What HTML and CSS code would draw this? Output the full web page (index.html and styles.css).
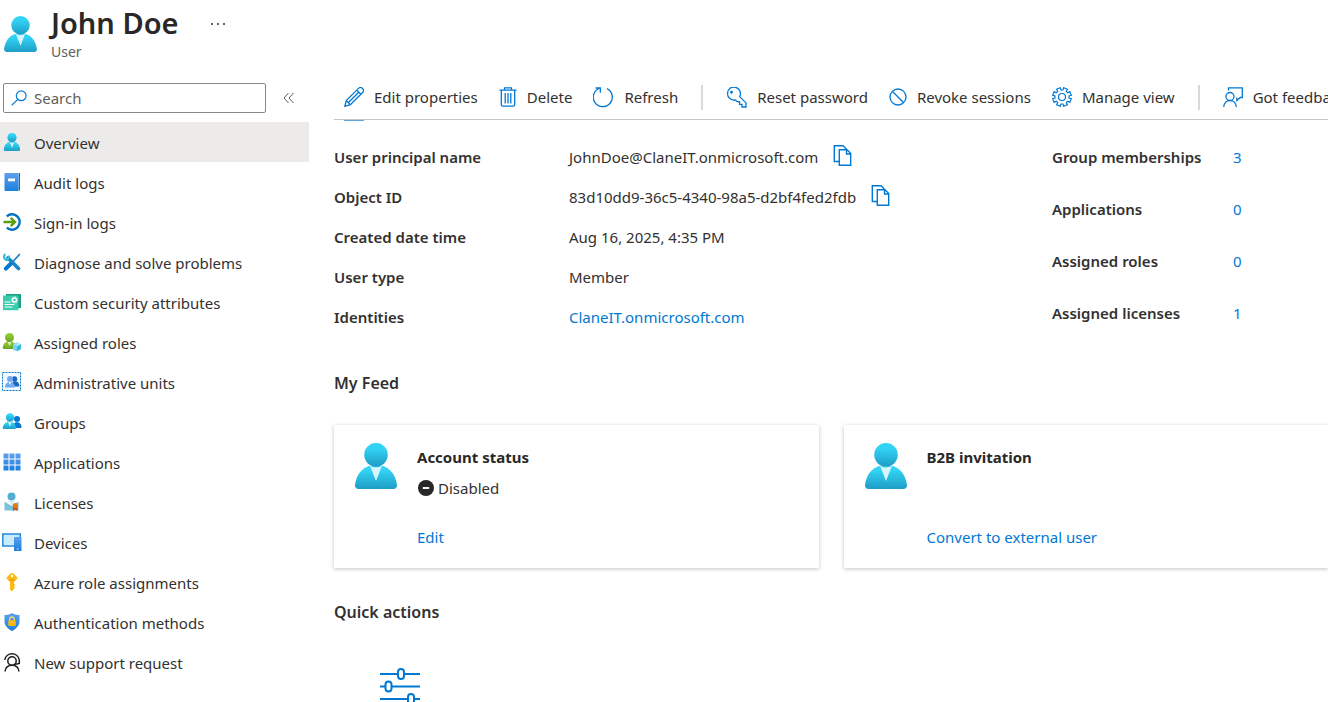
FILE: index.html
```html
<!DOCTYPE html>
<html lang="en">
<head>
<meta charset="utf-8">
<title>John Doe - User</title>
<link rel="stylesheet" href="styles.css">
</head>
<body>
<svg class="sprite" width="0" height="0" aria-hidden="true">
  <defs>
    <linearGradient id="cyan" x1="0" y1="0" x2="0" y2="1"><stop offset="0.2" stop-color="#32d4f5"/><stop offset="1" stop-color="#1f9dc6"/></linearGradient>
    <linearGradient id="blue" x1="0" y1="0" x2="0" y2="1"><stop offset="0" stop-color="#5ea0ef"/><stop offset="1" stop-color="#1b7fdc"/></linearGradient>
    <linearGradient id="green" x1="0" y1="0" x2="0" y2="1"><stop offset="0" stop-color="#9bd431"/><stop offset="1" stop-color="#6aa52a"/></linearGradient>
    <symbol id="person" viewBox="0 0 42 46">
      <path d="M38.500 46a3.500 3.500 0 0 0 3.500-4C40.500 30.500 33.500 22 21 22S1.500 30.500 0 42a3.500 3.500 0 0 0 3.500 4z" fill="url(#cyan)"/>
      <path d="M21 24.500a12 12 0 0 1-6-1.800L21 38l6-15.300a12 12 0 0 1-6 1.800z" fill="#d8f5fd"/>
      <circle cx="21" cy="11.800" r="11.800" fill="url(#cyan)"/>
    </symbol>
    <symbol id="copy" viewBox="0 0 18 21">
      <path d="M5.500 16.500H.800V.800h8.700l3.500 3.500M5.800 4.800h7.700l3.700 3.700v11.700H5.800zM13 5v4h4" fill="none" stroke="#0078d4" stroke-width="1.400"/>
    </symbol>
  </defs>
</svg>

<header class="page-header">
  <svg class="header-icon" aria-hidden="true"><use href="#person"/></svg>
  <div>
    <h1 class="title">John Doe</h1>
    <p class="subtitle">User</p>
  </div>
  <button class="plain more" aria-label="More">
    <svg width="16" height="4" viewBox="0 0 16 4"><g fill="#323130"><circle cx="2" cy="2" r="1"/><circle cx="8" cy="2" r="1"/><circle cx="14" cy="2" r="1"/></g></svg>
  </button>
</header>

<div class="layout">
  <aside class="sidebar">
    <div class="search-row">
      <label class="search">
        <svg width="16" height="16" viewBox="0 0 16 16" fill="none" stroke="#0078d4" stroke-width="1.200"><circle cx="10.200" cy="5.800" r="4.900"/><path d="M6.700 9.300.600 15.400"/></svg>
        <input class="search-input" type="text" placeholder="Search" aria-label="Search">
      </label>
      <button class="plain" aria-label="Collapse menu">
        <svg width="12" height="12" viewBox="0 0 12 12" fill="none" stroke="#605e5c" stroke-width="1"><path d="M5.500 1 1 6l4.500 5M10.500 1 6 6l4.500 5"/></svg>
      </button>
    </div>
    <nav class="menu">
      <a class="menu-item active" href="#"><svg viewBox="0 0 18 19"><use href="#person" width="18" height="19"/></svg>Overview</a>
      <a class="menu-item" href="#"><svg viewBox="0 0 18 18"><path d="M3.500 0H17v17.500H3.500z" fill="#bfe0fa"/><path d="M15.800 0H17v17.500h-1.200z" fill="#0f6cbd"/><rect x="1.500" width="14" height="18" rx="1" fill="url(#blue)"/><rect x="5" y="5.500" width="7" height="2.800" fill="#fff"/></svg>Audit logs</a>
      <a class="menu-item" href="#"><svg viewBox="0 0 18 18" fill="none"><path d="M3.800 3.300a7.700 7.700 0 1 1 0 11.400" stroke="#0072c6" stroke-width="2.400"/><path d="M.500 9h11M7.700 4.800 12 9l-4.300 4.200" stroke="#59a00c" stroke-width="2.400"/></svg>Sign-in logs</a>
      <a class="menu-item" href="#"><svg viewBox="0 0 18 18" fill="none"><path d="M15.500 15.500 5 5" stroke="#1b87c9" stroke-width="3.800" stroke-linecap="round"/><path d="M5.500 6.500A2.800 2.800 0 1 1 2.500 1.200" stroke="#32bedd" stroke-width="2"/><path d="M2.200 6.500a3 3 0 0 0 3.600-4" stroke="#32bedd" stroke-width="2"/><path d="M9 9.500 16.800 1.200" stroke="#1b87c9" stroke-width="1.800"/><path d="M2.800 15.700 7.500 11" stroke="#0078d4" stroke-width="4" stroke-linecap="round"/></svg>Diagnose and solve problems</a>
      <a class="menu-item" href="#"><svg viewBox="0 0 18 18"><path d="M3 1h15v14H3z" fill="#1d9f82"/><path d="M0 2.500h15.500v14.700H0z" fill="#3bcbad"/><path d="M1.500 9h6M1.500 11.500h10M1.500 14h8" stroke="#fff" stroke-width="1.200"/><circle cx="11.500" cy="7" r="2" fill="none" stroke="#fff" stroke-width="1.300"/><circle cx="11.500" cy="7" r="3.200" fill="none" stroke="#fff" stroke-width="1" stroke-dasharray="1 1.500"/></svg>Custom security attributes</a>
      <a class="menu-item" href="#"><svg viewBox="0 0 18 18"><path d="M1.200 16A1.500 1.500 0 0 1-.200 14C.400 10.500 3 8 6.500 8s6 2.500 6.500 6v2z" fill="url(#green)"/><path d="M4.500 8.500 6.500 13l2-4.500z" fill="#eaf7cf"/><circle cx="6.500" cy="4.500" r="4.500" fill="url(#green)"/><path d="m14 9.500 4 2v4.800l-4 2-4-2v-4.800z" fill="#37b7df"/><path d="m10 11.500 4 1.700 4-1.700-4-2z" fill="#9cebff"/><path d="M10 11.500v4.800l4 2v-5z" fill="#70d5f0"/></svg>Assigned roles</a>
      <a class="menu-item" href="#"><svg viewBox="0 0 18 18"><rect x="-.500" y="-.500" width="18" height="18" fill="#f3f9ff" stroke="#0078d4" stroke-dasharray="2 1"/><circle cx="11.500" cy="6" r="2.700" fill="#1967bd"/><path d="M8 13.500c0-7 8.500-7 8.500 0z" fill="#1967bd"/><circle cx="7" cy="6" r="3" fill="#72a9f7"/><path d="M2 14.500C1.500 7 12.500 7 12 14.500z" fill="#72a9f7"/><path d="m5.800 9 1.200 3 1.200-3z" fill="#fff"/></svg>Administrative units</a>
      <a class="menu-item" href="#"><svg viewBox="0 0 18 18"><circle cx="14" cy="6" r="3" fill="#0078d4"/><path d="M9.500 15c0-8 9-7 9-1 0 .700-.400 1-1 1z" fill="#0078d4"/><circle cx="7" cy="4.500" r="4.200" fill="url(#cyan)"/><path d="M1 16a1.300 1.300 0 0 1-1.300-1.500C.500 11 3 8.500 6.500 8.500S12.500 11 13 14.500A1.300 1.300 0 0 1 12 16z" fill="url(#cyan)"/><path d="M5 9l1.800 4.500L8.600 9z" fill="#d8f5fd"/></svg>Groups</a>
      <a class="menu-item" href="#"><svg viewBox="0 0 18 18"><g fill="url(#blue)"><path d="M.500.500h5v5h-5zM6.500.500h5v5h-5zM12.500.500h5v5h-5zM.500 6.500h5v5h-5zM6.500 6.500h5v5h-5zM12.500 6.500h5v5h-5zM.500 12.500h5v5h-5zM6.500 12.500h5v5h-5zM12.500 12.500h5v5h-5z"/></g></svg>Applications</a>
      <a class="menu-item" href="#"><svg viewBox="0 0 18 18"><circle cx="8.500" cy="3.500" r="4" fill="#54aed1"/><path d="M1.500 8.500 8.500 13l7-4.500v9h-14z" fill="#76c4de"/><path d="m5 8 3.500 4.500L12 8z" fill="#d3f0fa"/><path d="M10 13h4.500v5l-2.200-1.500L10 18z" fill="#c94f16"/><circle cx="12.300" cy="12.500" r="2.600" fill="#e97817"/></svg>Licenses</a>
      <a class="menu-item" href="#"><svg viewBox="0 0 18 18"><rect x="-.200" y="1" width="17.500" height="12" fill="#c9ecfb" stroke="#1683d9" stroke-width="1.400"/><rect x="11" y="4" width="7.500" height="14" rx=".500" fill="url(#blue)"/><path d="M13.700 16h2" stroke="#b8dcff"/></svg>Devices</a>
      <a class="menu-item" href="#"><svg viewBox="0 0 18 18"><path d="M9 0q1 0 2 1l3 3q1 1 0 2l-3 3v1.500L12 12l-1 1.500 1 1L9.300 18h-1L7 16.500V9L4 6q-1-1 0-2l3-3q1-1 2-1z" fill="#fdb913"/><circle cx="9" cy="3" r="1.200" fill="#fff"/><path d="M7 7h4" stroke="#e48a00"/></svg>Azure role assignments</a>
      <a class="menu-item" href="#"><svg viewBox="0 0 18 18"><path d="M9 0c2.500 1.500 4.500 2 7.500 2v6.500c0 4-3.500 7.500-7.500 9.500-4-2-7.500-5.500-7.500-9.500V2C4.500 2 6.500 1.500 9 0z" fill="url(#blue)"/><path d="M6.700 8V6.300a2.300 2.300 0 0 1 4.600 0V8" fill="none" stroke="#f9dc61" stroke-width="1.300"/><rect x="5.300" y="7.300" width="7.400" height="5.700" rx=".700" fill="#fdb913"/></svg>Authentication methods</a>
      <a class="menu-item" href="#"><svg viewBox="0 0 18 18" fill="none" stroke="#201f1e" stroke-width="1.500"><path d="M1.700 7a7.400 7.400 0 0 1 14.600 0v3.500l-5 1"/><circle cx="9" cy="8" r="4.200"/><path d="M2 18.500c.500-4 3.500-6.200 7-6.200s6.500 2.200 7 6.200"/></svg>New support request</a>
    </nav>
  </aside>

  <main class="main">
    <div class="toolbar">
      <button class="plain command"><svg width="20" height="20" viewBox="0 0 20 20" fill="none" stroke="#0078d4" stroke-width="1.300"><path d="M.800 19.300 2.300 13.600 14.500 1.400a2.900 2.900 0 0 1 4.100 4.100L6.400 17.700zM2.300 13.600l4.100 4.100M12.800 3.200l4 4M4.500 15.500l10.200-10.200"/></svg>Edit properties</button>
      <button class="plain command"><svg width="18" height="20" viewBox="0 0 18 20" fill="none" stroke="#0078d4" stroke-width="1.300"><path d="M.500 3.200h17M5.500 3V.800h7V3M2.300 3.200v14.500q0 1.500 1.500 1.500h10.400q1.500 0 1.500-1.500V3.200M6.200 6v10.500M9 6v10.500M11.800 6v10.500"/></svg>Delete</button>
      <button class="plain command"><svg width="21" height="21" viewBox="0 0 21 21" fill="none" stroke="#0078d4" stroke-width="1.300"><path d="M14 1.700a9.500 9.500 0 1 1-8-.200M2.500 1h4.800v4.800"/></svg>Refresh</button>
      <span class="divider"></span>
      <button class="plain command"><svg width="21" height="21" viewBox="0 0 21 21" fill="none" stroke="#0078d4" stroke-width="1.300"><path d="M13.700 9.600 20 15.900V20h-4v-2.700h-2.500v-2.600H11l-1.700-1.800a6.500 6.500 0 1 1 4.400-3.300z"/><circle cx="5.500" cy="5.300" r=".800"/></svg>Reset password</button>
      <button class="plain command"><svg width="18" height="18" viewBox="0 0 18 18" fill="none" stroke="#0078d4" stroke-width="1.300"><circle cx="9" cy="9" r="8"/><path d="m3.300 3.300 11.400 11.400"/></svg>Revoke sessions</button>
      <button class="plain command"><svg width="20" height="20" viewBox="0 0 20 20" fill="none" stroke="#0078d4" stroke-width="1.200"><circle cx="10" cy="10" r="3.500"/><path d="M8.300.700 9 3h2l.700-2.300 3.700 1.500-1.100 2.100 1.400 1.400 2.100-1.100 1.500 3.700L17 9v2l2.300.700-1.500 3.700-2.100-1.100-1.400 1.400 1.100 2.100-3.700 1.500L11 17H9l-.700 2.300-3.700-1.500 1.100-2.100-1.400-1.400-2.100 1.100-1.500-3.700L3 11V9L.700 8.300l1.500-3.700 2.100 1.100 1.400-1.400-1.100-2.100z"/></svg>Manage view</button>
      <span class="divider"></span>
      <button class="plain command"><svg width="20" height="20" viewBox="0 0 20 20" fill="none" stroke="#0078d4" stroke-width="1.300"><path d="M5.500 3.500V.800h13.800v9.700h-2l-3.500 3v-3"/><circle cx="7" cy="9.500" r="4"/><path d="M.700 20c.300-4 3-6.500 6.300-6.500s6 2.500 6.300 6.500"/></svg>Got feedback?</button>
    </div>
    <div class="tab-marker"></div>

    <div class="overview">
      <dl class="properties">
        <dt>User principal name</dt><dd>JohnDoe@ClaneIT.onmicrosoft.com<button class="plain copy-button" aria-label="Copy user principal name"><svg class="copy"><use href="#copy"/></svg></button></dd>
        <dt>Object ID</dt><dd>83d10dd9-36c5-4340-98a5-d2bf4fed2fdb<button class="plain copy-button" aria-label="Copy object ID"><svg class="copy"><use href="#copy"/></svg></button></dd>
        <dt>Created date time</dt><dd>Aug 16, 2025, 4:35 PM</dd>
        <dt>User type</dt><dd>Member</dd>
        <dt>Identities</dt><dd><a class="link" href="#">ClaneIT.onmicrosoft.com</a></dd>
      </dl>
      <dl class="counts">
        <dt>Group memberships</dt><dd><a class="link" href="#">3</a></dd>
        <dt>Applications</dt><dd><a class="link" href="#">0</a></dd>
        <dt>Assigned roles</dt><dd><a class="link" href="#">0</a></dd>
        <dt>Assigned licenses</dt><dd><a class="link" href="#">1</a></dd>
      </dl>
    </div>

    <h2 class="section-title">My Feed</h2>
    <div class="cards">
      <section class="card">
        <svg class="card-icon" aria-hidden="true"><use href="#person"/></svg>
        <div class="card-body">
          <h3 class="card-title">Account status</h3>
          <p class="status"><svg width="16" height="16" viewBox="0 0 16 16"><circle cx="8" cy="8" r="8" fill="#292827"/><path d="M4.800 8h6.400" stroke="#fff" stroke-width="2"/></svg>Disabled</p>
          <a class="link" href="#">Edit</a>
        </div>
      </section>
      <section class="card">
        <svg class="card-icon" aria-hidden="true"><use href="#person"/></svg>
        <div class="card-body">
          <h3 class="card-title">B2B invitation</h3>
          <p class="status"></p>
          <a class="link" href="#">Convert to external user</a>
        </div>
      </section>
    </div>

    <h2 class="section-title">Quick actions</h2>
    <div class="quick-actions">
      <svg width="42" height="42" viewBox="0 0 42 42" fill="#fff" stroke="#0078d4" stroke-width="2"><path d="M1 7h40M1 19.500h40M1 32h40"/><rect x="19" y="2" width="6" height="10" rx="3"/><rect x="6.500" y="14.500" width="6" height="10" rx="3"/><rect x="29" y="27" width="6" height="10" rx="3"/></svg>
    </div>
  </main>
</div>
</body>
</html>
```
FILE: styles.css
```css
* { box-sizing: border-box; }

body {
  display: flex;
  flex-direction: column;
  height: 100vh;
  margin: 0;
  overflow: hidden;
  background: #fff;
  color: #323130;
  font: 15px/20px "Noto Sans", "Open Sans", sans-serif;
}

h1, h2, h3, p, dl, dd { margin: 0; }
a { text-decoration: none; }
.link { color: #0078d4; }
.sprite { position: absolute; }

.plain {
  display: inline-flex;
  align-items: center;
  flex: none;
  padding: 0;
  border: 0;
  background: none;
  color: inherit;
  font: inherit;
  white-space: nowrap;
}

.page-header {
  display: flex;
  align-items: flex-start;
  flex: none;
  height: 83px;
  padding: 4px;
}
.header-icon { width: 33px; height: 36px; margin: 12px 14px 0 0; }
.title { font-size: 29px; line-height: 38px; font-weight: 600; color: #292827; }
.subtitle { font-size: 14px; color: #605e5c; }
.more { margin: 18px 0 0 32px; }

.layout { display: flex; flex: 1; min-height: 0; }
.sidebar { flex: none; width: 309px; }

.search-row {
  display: flex;
  align-items: center;
  gap: 17px;
  padding-left: 3px;
  margin-bottom: 9px;
}
.search {
  display: flex;
  align-items: center;
  gap: 7px;
  width: 263px;
  height: 30px;
  padding: 0 7px;
  border: 1px solid #8a8886;
  border-radius: 2px;
}
.search-input {
  flex: 1;
  min-width: 0;
  padding: 0;
  border: 0;
  outline: 0;
  font: inherit;
}
.search-input::placeholder { color: #605e5c; opacity: 1; }

.menu-item {
  display: flex;
  align-items: center;
  gap: 13px;
  height: 40px;
  padding: 2px 3px 0;
  color: #323130;
}
.menu-item svg { width: 18px; height: 18px; margin-bottom: 2px; overflow: visible; }
.menu-item.active { background: #edebe9; }

.main { flex: 1; min-width: 0; padding-left: 25px; overflow: hidden; }

.toolbar {
  display: flex;
  align-items: center;
  gap: 21px;
  height: 37px;
  padding: 0 0 8px 10px;
  border-bottom: 1px solid #c8c6c4;
}
.command { gap: 10px; }
.divider { flex: none; width: 2px; height: 25px; margin: 0 2px; background: #d9d9d9; }
.tab-marker { width: 20px; height: 1px; margin-left: 10px; background: #5ba7e0; }

.overview { display: flex; justify-content: space-between; margin-top: 26px; }
.properties {
  display: grid;
  grid-template-columns: 235px auto;
  grid-auto-rows: 40px;
}
.counts {
  display: grid;
  grid-template-columns: 181px 95px;
  grid-auto-rows: 52px;
}
dt { font-weight: 600; }
dd { display: flex; align-items: flex-start; }
.properties dd { gap: 15px; }
.copy-button { height: 16px; }
.copy { width: 19px; height: 21px; }

.section-title { font-size: 16px; line-height: 24px; font-weight: 600; }
.overview + .section-title { margin-top: 16px; }

.cards {
  display: grid;
  grid-template-columns: 1fr 1fr;
  gap: 25px;
  margin: 30px 0 32px;
}
.card {
  display: flex;
  gap: 20px;
  min-height: 143px;
  padding: 18px 21px;
  box-shadow: 0 1px 4px rgba(0, 0, 0, 0.24);
}
.card-icon { flex: none; width: 42px; height: 46px; }
.card-body { padding-top: 4px; }
.card-title { font-size: 15px; line-height: 20px; font-weight: 700; color: #292827; }
.status { display: flex; align-items: center; gap: 4px; height: 20px; margin: 11px 0 29px; padding-left: 1px; }

.quick-actions { padding: 43px 45px; }
```
